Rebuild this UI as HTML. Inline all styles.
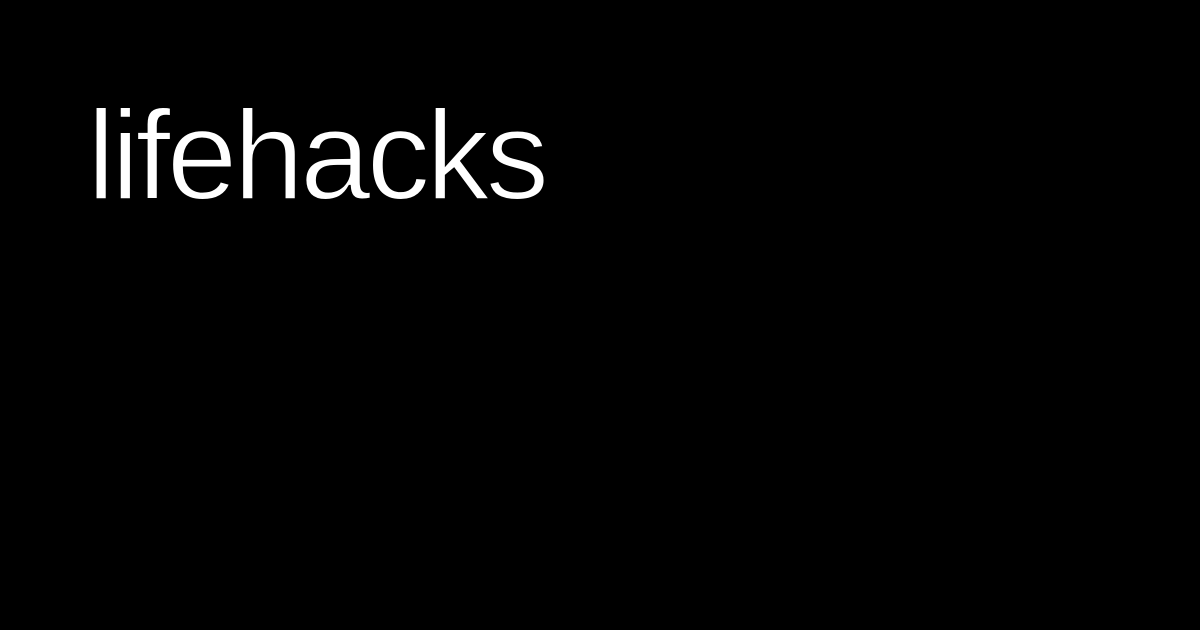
<!DOCTYPE html>
<html><head><style>
html,body{margin:0;padding:0;background:#000;width:1200px;height:630px;overflow:hidden}
.t{position:absolute;left:87px;top:91px;font-family:"Liberation Sans",sans-serif;font-size:127px;line-height:128px;color:#fff;letter-spacing:-4px;white-space:nowrap;-webkit-text-stroke:2px #000;paint-order:normal}
</style></head><body>
<div class="t">lifehacks</div>
</body></html>
